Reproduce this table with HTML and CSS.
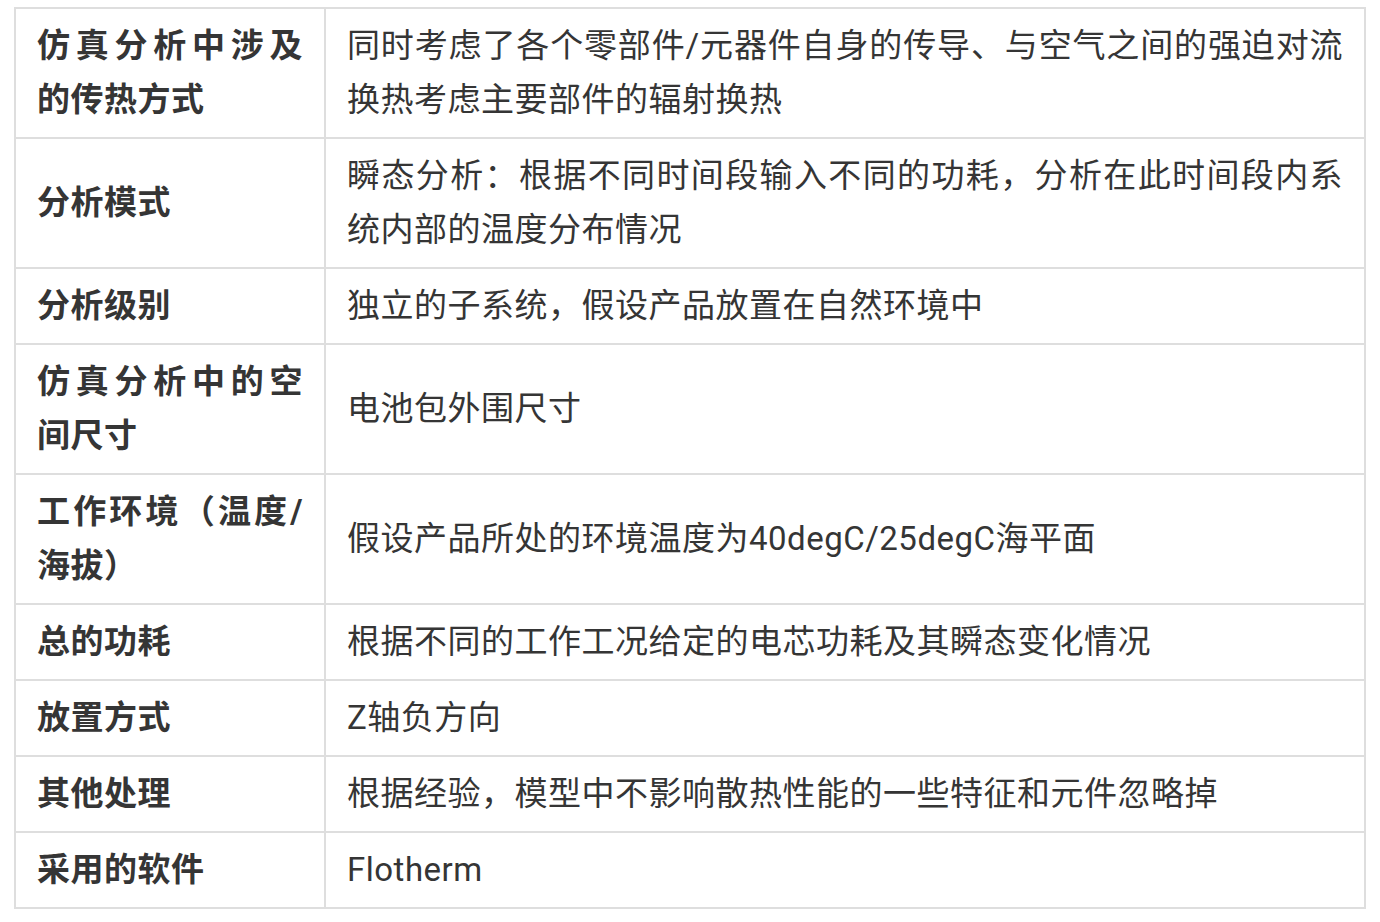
FILE: index.html
```html
<!DOCTYPE html>
<html lang="zh-CN">
<head>
<meta charset="utf-8">
<title>仿真分析</title>
<link rel="stylesheet" href="styles.css">
</head>
<body>
<table class="spec">
  <colgroup><col class="col-key"><col class="col-val"></colgroup>
  <tbody>
    <tr><th>仿真分析中涉及的传热方式</th><td>同时考虑了各个零部件/元器件自身的传导、与空气之间的强迫对流换热考虑主要部件的辐射换热</td></tr>
    <tr><th>分析模式</th><td>瞬态分析：根据不同时间段输入不同的功耗，分析在此时间段内系统内部的温度分布情况</td></tr>
    <tr><th>分析级别</th><td>独立的子系统，假设产品放置在自然环境中</td></tr>
    <tr><th>仿真分析中的空间尺寸</th><td>电池包外围尺寸</td></tr>
    <tr><th>工作环境（温度/海拔）</th><td>假设产品所处的环境温度为40degC/25degC海平面</td></tr>
    <tr><th>总的功耗</th><td>根据不同的工作工况给定的电芯功耗及其瞬态变化情况</td></tr>
    <tr><th>放置方式</th><td>Z轴负方向</td></tr>
    <tr><th>其他处理</th><td>根据经验，模型中不影响散热性能的一些特征和元件忽略掉</td></tr>
    <tr><th>采用的软件</th><td>Flotherm</td></tr>
  </tbody>
</table>
</body>
</html>
```
FILE: styles.css
```css
html, body {
  margin: 0;
  padding: 0;
  background: #ffffff;
}

.spec {
  border-collapse: collapse;
  table-layout: fixed;
  width: 1352px;
  margin: 7px 14px 0 14px;
  font-family: "Roboto", "Noto Sans CJK SC", sans-serif;
  font-size: 33px;
  letter-spacing: 0.5px;
  line-height: 54px;
  color: #353535;
}

.col-key { width: 310px; }

.spec th,
.spec td {
  border: 2px solid #dedede;
  padding: 10px 21px;
  vertical-align: middle;
  text-align: justify;
}

.spec th {
  font-weight: 700;
}

.spec td {
  font-weight: 400;
}
```
